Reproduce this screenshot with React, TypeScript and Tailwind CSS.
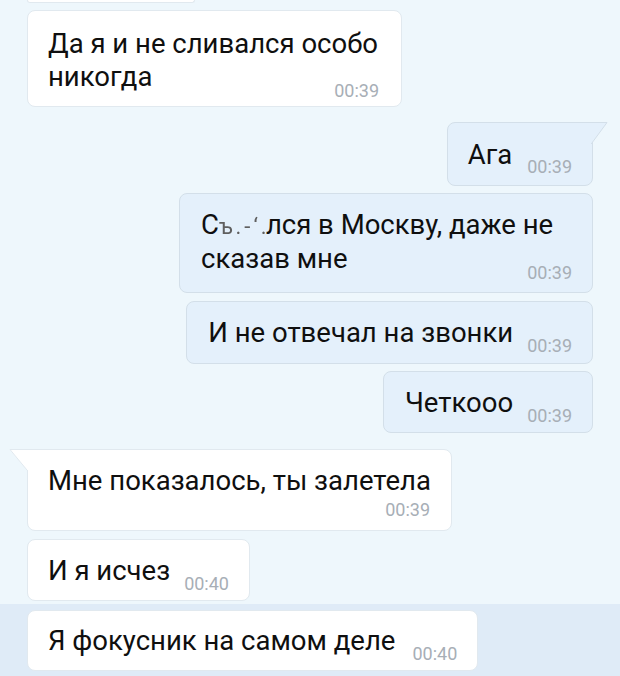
import React from "react";

const FONT = { fontFamily: "Roboto, 'Noto Sans', 'Liberation Sans', sans-serif" };

function Time({ t, className = "" }: { t: string; className?: string }) {
  return (
    <span className={"text-[18px] leading-[20px] text-[#a7aeb6] whitespace-nowrap " + className}>{t}</span>
  );
}

function OutTail() {
  return (
    <svg className="absolute right-[-18px] top-[-1px]" width="20" height="24" viewBox="0 0 20 24">
      <path d="M0 1 L17 1 L1 22 L0 22 Z" fill="#e4f0fb" />
      <path d="M0 0.5 L17 0.5 L1.2 22" fill="none" stroke="#d3dfe9" strokeWidth="1" />
    </svg>
  );
}

function InTail() {
  return (
    <svg className="absolute left-[-20px] top-[-1px]" width="22" height="24" viewBox="0 0 22 24">
      <path d="M22 1 L2 1 L20 22 L22 22 Z" fill="#ffffff" />
      <path d="M22 0.5 L2 0.5 L19.8 22" fill="none" stroke="#e1e9ef" strokeWidth="1" />
    </svg>
  );
}

export default function App() {
  const outB = "relative bg-[#e4f0fb] border border-[#d3dfe9] rounded-[8px] text-[#0f0f0f]";
  const inB = "relative bg-white border border-[#e1e9ef] rounded-[8px] text-[#0f0f0f]";
  return (
    <div style={FONT} className="w-[620px] h-[676px] overflow-hidden bg-[#eef7fc] flex flex-col text-[27.5px]">
      {/* partial bubble at top */}
      <div className="ml-[27px] w-[168px] h-[3px] bg-white border-b border-x border-[#e1e9ef] rounded-b-[6px]" />

      {/* 1 */}
      <div className="mt-[7px] flex">
        <div className={inB + " ml-[27px] w-[375px] pl-[20px] pr-[22px] pt-[16px] pb-[5px] flex flex-col"}>
          <div className="leading-[33px] whitespace-nowrap">Да я и не сливался особо<br />никогда</div>
          <Time t="00:39" className="self-end -mt-[12px]" />
        </div>
      </div>

      {/* Ага */}
      <div className="mt-[15px] flex justify-end">
        <div className={outB + " mr-[27px] rounded-tr-none pl-[20px] pr-[20px] pt-[16px] pb-[14px] flex items-baseline"}>
          <span className="leading-[32px]">Ага</span>
          <Time t="00:39" className="ml-[15px] relative top-[9px]" />
          <OutTail />
        </div>
      </div>

      {/* Сбежался */}
      <div className="mt-[7px] flex justify-end">
        <div className={outB + " mr-[27px] w-[414px] pl-[21px] pr-[20px] pt-[14px] pb-[9px] flex flex-col"}>
          <div className="leading-[34px] whitespace-nowrap">
            С<span className="inline-block w-[47px] leading-[20px] text-[#5f5f5f] blur-[0.5px] tracking-[3px] text-[22px]">ъ.-‘.</span>лся в Москву, даже не<br />сказав мне
          </div>
          <Time t="00:39" className="self-end -mt-[13px]" />
        </div>
      </div>

      {/* И не отвечал */}
      <div className="mt-[8px] flex justify-end">
        <div className={outB + " mr-[27px] pl-[21px] pr-[20px] pt-[15px] pb-[14px] flex items-baseline"}>
          <span className="leading-[32px] whitespace-nowrap">И не отвечал на звонки</span>
          <Time t="00:39" className="ml-[14px] relative top-[10px]" />
        </div>
      </div>

      {/* Четкооо */}
      <div className="mt-[7px] flex justify-end">
        <div className={outB + " mr-[27px] pl-[21px] pr-[20px] pt-[15px] pb-[13px] flex items-baseline"}>
          <span className="leading-[32px]">Четкооо</span>
          <Time t="00:39" className="ml-[14px] relative top-[10px]" />
        </div>
      </div>

      {/* Мне показалось */}
      <div className="mt-[16px] flex">
        <div className={inB + " ml-[27px] rounded-tl-none w-[425px] pl-[20px] pr-[21px] pt-[14px] pb-[10px] flex flex-col"}>
          <span className="leading-[33px] whitespace-nowrap">Мне показалось, ты залетела</span>
          <Time t="00:39" className="self-end mt-[3px]" />
          <InTail />
        </div>
      </div>

      {/* И я исчез */}
      <div className="mt-[8px] flex">
        <div className={inB + " ml-[27px] pl-[20px] pr-[20px] pt-[15px] pb-[13px] flex items-baseline"}>
          <span className="leading-[32px]">И я исчез</span>
          <Time t="00:40" className="ml-[14px] relative top-[10px]" />
        </div>
      </div>

      {/* bottom band */}
      <div className="mt-[3px] flex-1 bg-[#dfebf7] pt-[6px] flex">
        <div className="h-fit flex">
          <div className={inB + " ml-[27px] pl-[20px] pr-[20px] pt-[14px] pb-[13px] flex items-baseline"}>
            <span className="leading-[32px] whitespace-nowrap">Я фокусник на самом деле</span>
            <Time t="00:40" className="ml-[17px] relative top-[10px]" />
          </div>
        </div>
      </div>
    </div>
  );
}
